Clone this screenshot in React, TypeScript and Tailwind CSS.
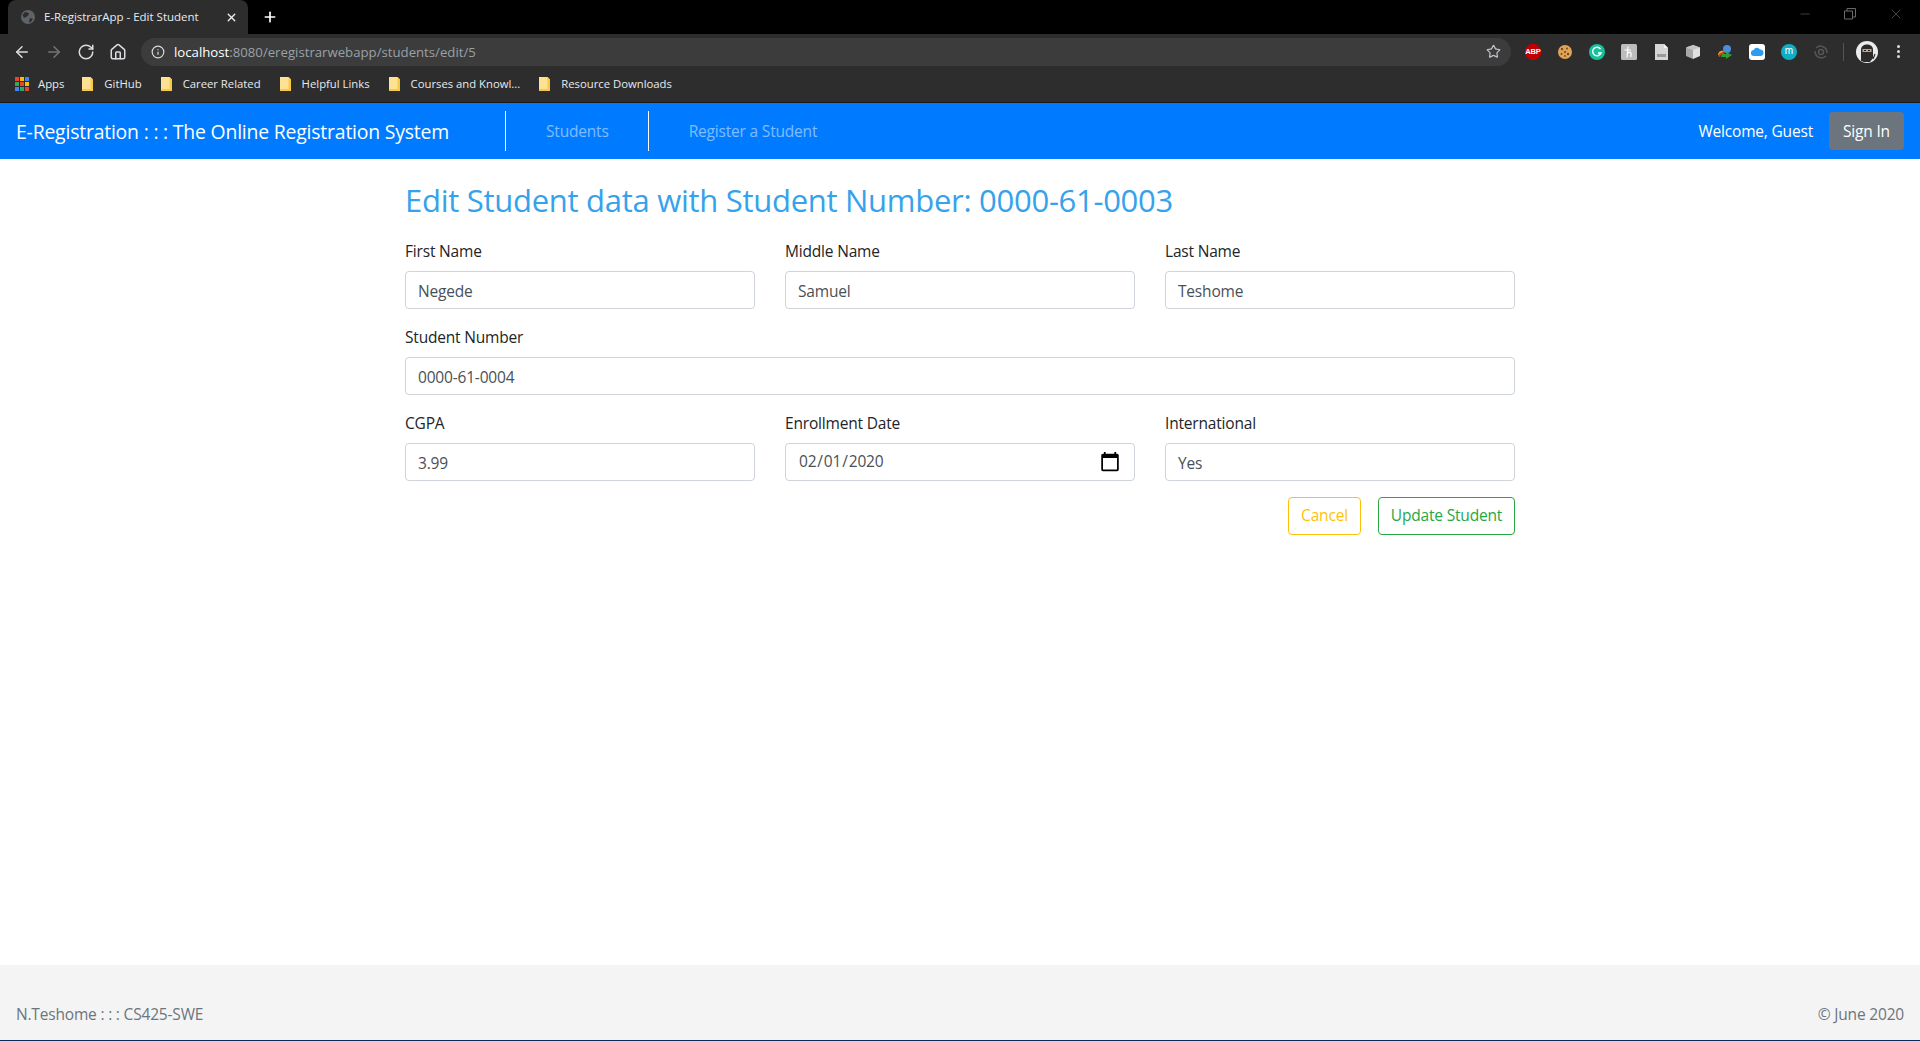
import { ArrowLeft, ArrowRight, RotateCw, Home, Info, Star, X, Plus, Minus } from 'lucide-react';

const font = "font-['Open_Sans','Noto_Sans',sans-serif]";
const body = 'text-[15.5px] tracking-[-0.012em]';

const bookmarks = ['GitHub', 'Career Related', 'Helpful Links', 'Courses and Knowl...', 'Resource Downloads'];

const appColors = ['#ea4335', '#fbbc04', '#4285f4', '#34a853', '#ea4335', '#fbbc04', '#4285f4', '#34a853', '#ea4335'];

function Folder() {
  return (
    <svg width="11" height="14" viewBox="0 0 11 14">
      <path d="M0 0H8.5L11 2.5V14H0Z" fill="#fde293" />
      <path d="M8.5 0V12H0V14H11V2.5Z" fill="#f9c846" />
    </svg>
  );
}

function AppsIcon() {
  return (
    <div className="grid grid-cols-3 gap-px w-[14px] h-[14px]">
      {appColors.map((c, i) => (
        <span key={i} className="w-[4px] h-[4px]" style={{ backgroundColor: c }} />
      ))}
    </div>
  );
}

function Extensions() {
  return (
    <div className="flex items-center gap-[16px]">
      {/* adblock */}
      <div className="relative w-4 h-4 flex items-center justify-center">
        <svg width="16" height="16" viewBox="0 0 16 16" className="absolute inset-0">
          <path d="M5 0H11L16 5V11L11 16H5L0 11V5Z" fill="#c00000" />
        </svg>
        <span className="relative text-[7.5px] font-bold tracking-[-0.02em] text-white font-['Liberation_Sans',sans-serif]">ABP</span>
      </div>
      {/* cookie */}
      <svg width="16" height="16" viewBox="0 0 16 16">
        <circle cx="8" cy="8" r="7" fill="#e0a458" />
        <circle cx="5" cy="5" r="1.2" fill="#7a4a1d" />
        <circle cx="10" cy="4.5" r="1" fill="#7a4a1d" />
        <circle cx="8" cy="8" r="1.1" fill="#7a4a1d" />
        <circle cx="4.5" cy="10" r="1" fill="#7a4a1d" />
        <circle cx="11" cy="10" r="1.2" fill="#7a4a1d" />
        <circle cx="8" cy="12" r="0.9" fill="#7a4a1d" />
      </svg>
      {/* grammarly */}
      <svg width="16" height="16" viewBox="0 0 16 16">
        <circle cx="8" cy="8" r="8" fill="#15c39a" />
        <path d="M11.5 5A4.3 4.3 0 1 0 12 9H9" fill="none" stroke="#fff" strokeWidth="1.5" />
      </svg>
      {/* h tile */}
      <svg width="16" height="16" viewBox="0 0 16 16">
        <rect width="16" height="16" rx="1.5" fill="#bdbdbd" />
        <path d="M7 2.5C6.5 6 6.5 10 6 13.5M3.5 6H10M7 9C8.5 7.5 10 8 10 9.5V13" fill="none" stroke="#fff" strokeWidth="1.2" />
      </svg>
      {/* file */}
      <svg width="16" height="16" viewBox="0 0 16 16">
        <path d="M2 0H11L15 4V16H2Z" fill="#d6d6d6" />
        <path d="M11 0V4H15Z" fill="#f5f5f5" />
        <rect x="4" y="10" width="9" height="3" fill="#9a9a9a" />
      </svg>
      {/* cube */}
      <svg width="16" height="16" viewBox="0 0 16 16">
        <path d="M8 1L15 3.5V12L8 15Z" fill="#e0e0e0" />
        <path d="M8 1L1 3.5V12L8 15Z" fill="#a8a8a8" />
        <path d="M1 3.5L8 1L15 3.5L8 6Z" fill="#c4c4c4" />
      </svg>
      {/* download manager */}
      <svg width="16" height="16" viewBox="0 0 16 16">
        <circle cx="10" cy="5" r="4" fill="#4a90d9" />
        <path d="M1 11C1 7 5 6 7 7L5 9C4 9 3 10 3 11Z" fill="#e8a020" />
        <path d="M1 12C2 9 5 8 8 8L7 10C5 10 3 11 3 13Z" fill="#d23a2a" />
        <path d="M5 10H9V8L15 11L9 15V13L4 13Z" fill="#2f9e2f" />
      </svg>
      {/* icloud */}
      <div className="w-4 h-4 rounded-[3px] bg-white flex items-center justify-center">
        <svg width="13" height="9" viewBox="0 0 13 9">
          <path d="M3 9A3 3 0 0 1 2.800 3A3.500 3.500 0 0 1 9 2.500A3.300 3.300 0 0 1 10 9Z" fill="#2d9cf0" />
        </svg>
      </div>
      {/* m */}
      <div className="w-4 h-4 rounded-full bg-[#11adc4] flex items-center justify-center">
        <span className="text-[10px] leading-none text-white font-['Liberation_Sans',sans-serif] mb-px">m</span>
      </div>
      {/* sync */}
      <svg width="16" height="16" viewBox="0 0 16 16" fill="none" stroke="#555" strokeWidth="1.5">
        <path d="M3 4A6.500 6.500 0 0 1 14 9" />
        <path d="M13 12A6.500 6.500 0 0 1 2 7" />
        <circle cx="8" cy="8" r="2.500" />
      </svg>
    </div>
  );
}

function Avatar() {
  return (
    <svg width="22" height="22" viewBox="0 0 22 22" className="ml-[12px]">
      <circle cx="11" cy="11" r="11" fill="#ececec" />
      <path d="M5 20V9C5 5 8 3.500 11 3.500C14 3.500 17 5 17 9V17L14 21H8Z" fill="#2b2b2b" />
      <rect x="6.500" y="8" width="9" height="3" fill="#c9a27e" />
      <rect x="8" y="9" width="2" height="1" fill="#222" />
      <rect x="12" y="9" width="2" height="1" fill="#222" />
      <path d="M17 18L19 13" stroke="#2b2b2b" strokeWidth="1.2" />
    </svg>
  );
}

function Chrome() {
  return (
    <div className={`${font} flex flex-col`}>
      <div className="h-[34px] bg-black flex items-end pl-[8px] relative">
        <div className="w-[240px] h-[34px] bg-[#2d2d2d] rounded-t-[8px] flex items-center pl-[13px] pr-[10px] text-[11.5px] text-[#e8eaed] gap-[9px]">
          <svg width="14" height="14" viewBox="0 0 14 14">
            <circle cx="7" cy="7" r="7" fill="#5f6368" />
            <path d="M4 2L8 3L7 6L3 8L1.500 5ZM9 8L12 9L9.500 12.500L8 12Z" fill="#2d2d2d" />
          </svg>
          <span className="flex-1 whitespace-nowrap">E-RegistrarApp - Edit Student</span>
          <X size={13} strokeWidth={2.5} className="text-[#e8eaed]" />
        </div>
        <Plus size={16} strokeWidth={2.5} className="text-white ml-[14px] mb-[9px]" />
        <div className="ml-auto flex items-center gap-[32px] h-full pr-[16px] pb-[6px] text-[#6a6a6a]">
          <Minus size={14} strokeWidth={1} />
          <svg width="12" height="12" viewBox="0 0 12 12" fill="none" stroke="currentColor">
            <path d="M0.500 3H8.500V11H0.500ZM3 3V0.500H11.500V9H8.500" />
          </svg>
          <X size={16} strokeWidth={1} />
        </div>
      </div>
      <div className="h-[35px] bg-[#2d2d2d] flex items-center pl-[13px] pr-[20px]">
        <div className="flex items-center gap-[14px] text-[#dadce0]">
          <ArrowLeft size={18} strokeWidth={2} />
          <ArrowRight size={18} strokeWidth={2} className="text-[#72757a]" />
          <RotateCw size={18} strokeWidth={2} />
          <Home size={18} strokeWidth={2} />
        </div>
        <div className="ml-[14px] flex-1 h-[28px] rounded-full bg-[#3c3c3c] flex items-center pl-[10px] pr-[10px] text-[13.2px]">
          <Info size={14} className="text-[#dadce0]" />
          <span className="ml-[9px] pt-[2px] text-white">localhost</span>
          <span className="pt-[2px] text-[#9aa0a6]">:8080/eregistrarwebapp/students/edit/5</span>
          <Star size={15} className="ml-auto text-[#bdc1c6]" />
        </div>
        <div className="ml-[14px]">
          <Extensions />
        </div>
        <div className="w-px h-[18px] bg-[#555] ml-[14px]" />
        <Avatar />
        <div className="ml-[19px] flex flex-col gap-[2px]">
          <span className="w-[3px] h-[3px] rounded-full bg-[#dadce0]" />
          <span className="w-[3px] h-[3px] rounded-full bg-[#dadce0]" />
          <span className="w-[3px] h-[3px] rounded-full bg-[#dadce0]" />
        </div>
      </div>
      <div className="h-[34px] bg-[#2d2d2d] border-b border-[#1a1a1a] flex items-center pl-[15px] pb-[3px] text-[11.3px] text-[#e8eaed]">
        <div className="flex items-center gap-[9px] mr-[18px]">
          <AppsIcon />
          <span>Apps</span>
        </div>
        {bookmarks.map((b) => (
          <div key={b} className="flex items-center gap-[11px] mr-[19px]">
            <Folder />
            <span className="whitespace-nowrap">{b}</span>
          </div>
        ))}
      </div>
    </div>
  );
}

function Field({ label, value, className = '' }: { label: string; value: string; className?: string }) {
  return (
    <div className={`flex flex-col ${className}`}>
      <label className={`${body} leading-[24px] text-[#212529] mb-[8px]`}>{label}</label>
      <input
        readOnly
        value={value}
        className={`${body} h-[38px] w-full px-[12px] pt-[2px] border border-[#ced4da] rounded-[4px] bg-white text-[#495057] outline-none`}
      />
    </div>
  );
}

export default function App() {
  return (
    <div className={`${font} h-[1041px] flex flex-col bg-white overflow-hidden`}>
      <Chrome />
      <nav className="h-[56px] bg-[#007bff] flex items-center px-[16px]">
        <span className="text-[19.4px] tracking-[-0.01em] pt-[2px] text-white whitespace-nowrap">E-Registration : : : The Online Registration System</span>
        <div className="flex items-center ml-[56px] h-[40px] border-l border-white">
          <a className={`${body} pl-[40px] pr-[39px] pt-[2px] text-white/50`}>Students</a>
        </div>
        <div className="flex items-center h-[40px] border-l border-white">
          <a className={`${body} px-[40px] pt-[2px] text-white/50`}>Register a Student</a>
        </div>
        <span className={`${body} ml-auto pt-[2px] text-white`}>Welcome, Guest</span>
        <button className={`${body} ml-[16px] h-[38px] w-[75px] pt-[2px] bg-[#6c757d] rounded-[4px] text-white`}>Sign In</button>
      </nav>
      <main className="w-[1110px] mx-auto flex-1">
        <h1 className="text-[31px] tracking-[-0.009em] leading-[38px] text-[#36a2eb] mt-[22px] mb-[20px]">
          Edit Student data with Student Number: 0000-61-0003
        </h1>
        <div className="grid grid-cols-3 gap-x-[30px] gap-y-[16px]">
          <Field label="First Name" value="Negede" />
          <Field label="Middle Name" value="Samuel" />
          <Field label="Last Name" value="Teshome" />
          <Field label="Student Number" value="0000-61-0004" className="col-span-3" />
          <Field label="CGPA" value="3.99" />
          <div className="flex flex-col">
            <label className={`${body} leading-[24px] text-[#212529] mb-[8px]`}>Enrollment Date</label>
            <input
              type="date"
              defaultValue="2020-02-01"
              className={`${body} h-[38px] w-full px-[12px] border border-[#ced4da] rounded-[4px] bg-white text-[#495057] outline-none [&::-webkit-calendar-picker-indicator]:w-[22px] [&::-webkit-calendar-picker-indicator]:h-[22px] [&::-webkit-calendar-picker-indicator]:p-0 [&::-webkit-calendar-picker-indicator]:m-0 [&::-webkit-calendar-picker-indicator]:mr-[1px]`}
            />
          </div>
          <Field label="International" value="Yes" />
        </div>
        <div className="flex justify-end gap-[17px] mt-[16px]">
          <button className={`${body} h-[38px] w-[73px] border border-[#ffc107] rounded-[4px] text-[#ffc107]`}>Cancel</button>
          <button className={`${body} h-[38px] w-[137px] border border-[#28a745] rounded-[4px] text-[#28a745]`}>Update Student</button>
        </div>
      </main>
      <footer className={`${body} h-[76px] bg-[#f4f4f4] border-b border-[#0a2a5e] flex items-end justify-between px-[16px] pb-[14px] text-[#6c757d]`}>
        <span>N.Teshome : : : CS425-SWE</span>
        <span>© June 2020</span>
      </footer>
    </div>
  );
}
